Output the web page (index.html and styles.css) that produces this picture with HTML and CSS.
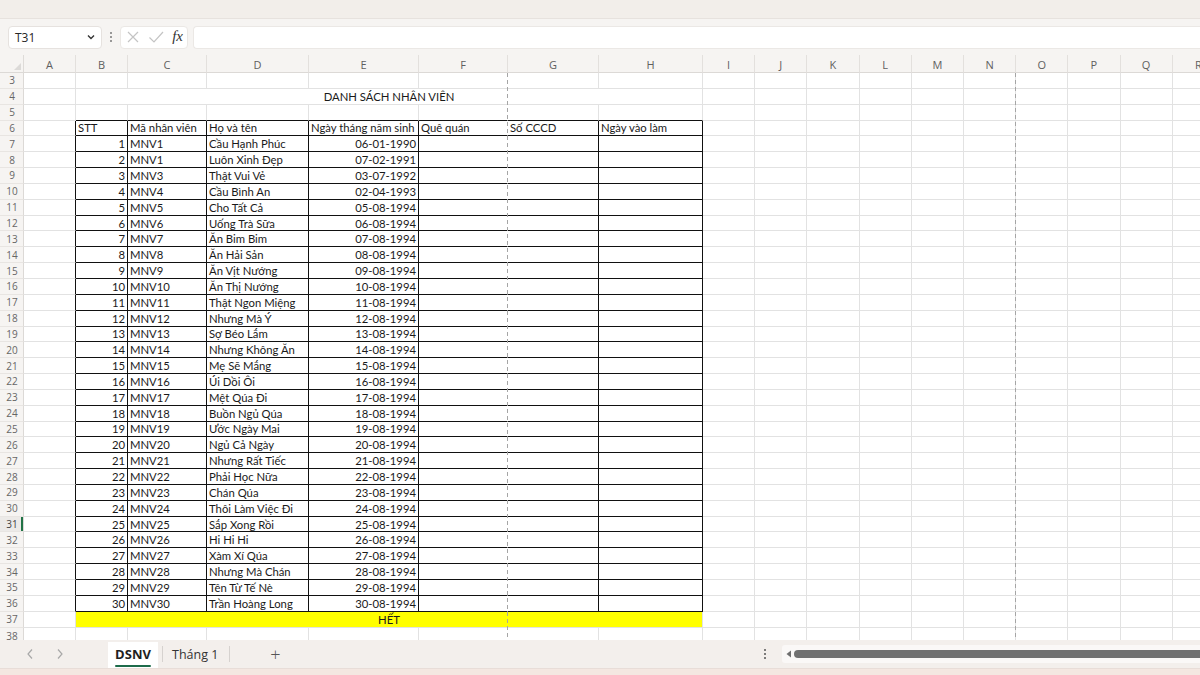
FILE: index.html
```html
<!DOCTYPE html>
<html lang="vi">
<head>
<meta charset="utf-8">
<title>DSNV</title>
<link rel="stylesheet" href="styles.css">
</head>
<body>
<div class="app">
  <div class="topband"></div>
  <div class="fbar">
    <div class="namebox"><span>T31</span>
      <svg class="chev" width="10" height="8" viewBox="0 0 10 8"><path d="M2 2.5 L5 5.5 L8 2.5" fill="none" stroke="#333" stroke-width="1.4"/></svg>
    </div>
    <div class="kebab"><i></i><i></i><i></i></div>
    <div class="fxbox">
      <svg width="14" height="14" viewBox="0 0 14 14"><path d="M2 2 L12 12 M12 2 L2 12" stroke="#c4c4c4" stroke-width="1.2"/></svg>
      <svg width="16" height="14" viewBox="0 0 16 14"><path d="M1.5 7.5 L6 12 L15 2" fill="none" stroke="#c4c4c4" stroke-width="1.2"/></svg>
      <span class="fx">fx</span>
    </div>
    <div class="finput"></div>
  </div>

  <div class="sheet">
    <div class="grid">
      <div class="corner"><span class="tri"></span></div>
      <div class="ch">A</div><div class="ch">B</div><div class="ch">C</div><div class="ch">D</div><div class="ch">E</div><div class="ch">F</div><div class="ch">G</div><div class="ch">H</div><div class="ch">I</div><div class="ch">J</div><div class="ch">K</div><div class="ch">L</div><div class="ch">M</div><div class="ch">N</div><div class="ch">O</div><div class="ch">P</div><div class="ch">Q</div><div class="ch">R</div>

      <div class="rh">3</div><div class="c"></div><div class="c"></div><div class="c"></div><div class="c"></div><div class="c"></div><div class="c f"></div><div class="c"></div><div class="c"></div><div class="rest"></div>
      <div class="rh">4</div><div class="c"></div><div class="c merged title">DANH SÁCH NHÂN VIÊN</div><div class="rest"></div>
      <div class="rh">5</div><div class="c"></div><div class="c tt"></div><div class="c tt"></div><div class="c tt"></div><div class="c tt"></div><div class="c tt f"></div><div class="c tt"></div><div class="c tt"></div><div class="rest"></div>
      <div class="rh">6</div><div class="c al"></div><div class="c t">STT</div><div class="c t">Mã nhân viên</div><div class="c t">Họ và tên</div><div class="c t">Ngày tháng năm sinh</div><div class="c t f">Quê quán</div><div class="c t">Số CCCD</div><div class="c t">Ngày vào làm</div><div class="rest"></div>
      <div class="rh">7</div><div class="c al"></div><div class="c t r">1</div><div class="c t">MNV1</div><div class="c t">Cầu Hạnh Phúc</div><div class="c t r">06-01-1990</div><div class="c t f"></div><div class="c t"></div><div class="c t"></div><div class="rest"></div>
      <div class="rh">8</div><div class="c al"></div><div class="c t r">2</div><div class="c t">MNV1</div><div class="c t">Luôn Xinh Đẹp</div><div class="c t r">07-02-1991</div><div class="c t f"></div><div class="c t"></div><div class="c t"></div><div class="rest"></div>
      <div class="rh">9</div><div class="c al"></div><div class="c t r">3</div><div class="c t">MNV3</div><div class="c t">Thật Vui Vẻ</div><div class="c t r">03-07-1992</div><div class="c t f"></div><div class="c t"></div><div class="c t"></div><div class="rest"></div>
      <div class="rh">10</div><div class="c al"></div><div class="c t r">4</div><div class="c t">MNV4</div><div class="c t">Cầu Bình An</div><div class="c t r">02-04-1993</div><div class="c t f"></div><div class="c t"></div><div class="c t"></div><div class="rest"></div>
      <div class="rh">11</div><div class="c al"></div><div class="c t r">5</div><div class="c t">MNV5</div><div class="c t">Cho Tất Cả</div><div class="c t r">05-08-1994</div><div class="c t f"></div><div class="c t"></div><div class="c t"></div><div class="rest"></div>
      <div class="rh">12</div><div class="c al"></div><div class="c t r">6</div><div class="c t">MNV6</div><div class="c t">Uống Trà Sữa</div><div class="c t r">06-08-1994</div><div class="c t f"></div><div class="c t"></div><div class="c t"></div><div class="rest"></div>
      <div class="rh">13</div><div class="c al"></div><div class="c t r">7</div><div class="c t">MNV7</div><div class="c t">Ăn Bim Bim</div><div class="c t r">07-08-1994</div><div class="c t f"></div><div class="c t"></div><div class="c t"></div><div class="rest"></div>
      <div class="rh">14</div><div class="c al"></div><div class="c t r">8</div><div class="c t">MNV8</div><div class="c t">Ăn Hải Sản</div><div class="c t r">08-08-1994</div><div class="c t f"></div><div class="c t"></div><div class="c t"></div><div class="rest"></div>
      <div class="rh">15</div><div class="c al"></div><div class="c t r">9</div><div class="c t">MNV9</div><div class="c t">Ăn Vịt Nướng</div><div class="c t r">09-08-1994</div><div class="c t f"></div><div class="c t"></div><div class="c t"></div><div class="rest"></div>
      <div class="rh">16</div><div class="c al"></div><div class="c t r">10</div><div class="c t">MNV10</div><div class="c t">Ăn Thị Nướng</div><div class="c t r">10-08-1994</div><div class="c t f"></div><div class="c t"></div><div class="c t"></div><div class="rest"></div>
      <div class="rh">17</div><div class="c al"></div><div class="c t r">11</div><div class="c t">MNV11</div><div class="c t">Thật Ngon Miệng</div><div class="c t r">11-08-1994</div><div class="c t f"></div><div class="c t"></div><div class="c t"></div><div class="rest"></div>
      <div class="rh">18</div><div class="c al"></div><div class="c t r">12</div><div class="c t">MNV12</div><div class="c t">Nhưng Mà Ý</div><div class="c t r">12-08-1994</div><div class="c t f"></div><div class="c t"></div><div class="c t"></div><div class="rest"></div>
      <div class="rh">19</div><div class="c al"></div><div class="c t r">13</div><div class="c t">MNV13</div><div class="c t">Sợ Béo Lắm</div><div class="c t r">13-08-1994</div><div class="c t f"></div><div class="c t"></div><div class="c t"></div><div class="rest"></div>
      <div class="rh">20</div><div class="c al"></div><div class="c t r">14</div><div class="c t">MNV14</div><div class="c t">Nhưng Không Ăn</div><div class="c t r">14-08-1994</div><div class="c t f"></div><div class="c t"></div><div class="c t"></div><div class="rest"></div>
      <div class="rh">21</div><div class="c al"></div><div class="c t r">15</div><div class="c t">MNV15</div><div class="c t">Mẹ Sẽ Mắng</div><div class="c t r">15-08-1994</div><div class="c t f"></div><div class="c t"></div><div class="c t"></div><div class="rest"></div>
      <div class="rh">22</div><div class="c al"></div><div class="c t r">16</div><div class="c t">MNV16</div><div class="c t">Úi Dồi Ôi</div><div class="c t r">16-08-1994</div><div class="c t f"></div><div class="c t"></div><div class="c t"></div><div class="rest"></div>
      <div class="rh">23</div><div class="c al"></div><div class="c t r">17</div><div class="c t">MNV17</div><div class="c t">Mệt Qúa Đi</div><div class="c t r">17-08-1994</div><div class="c t f"></div><div class="c t"></div><div class="c t"></div><div class="rest"></div>
      <div class="rh">24</div><div class="c al"></div><div class="c t r">18</div><div class="c t">MNV18</div><div class="c t">Buồn Ngủ Qúa</div><div class="c t r">18-08-1994</div><div class="c t f"></div><div class="c t"></div><div class="c t"></div><div class="rest"></div>
      <div class="rh">25</div><div class="c al"></div><div class="c t r">19</div><div class="c t">MNV19</div><div class="c t">Ước Ngày Mai</div><div class="c t r">19-08-1994</div><div class="c t f"></div><div class="c t"></div><div class="c t"></div><div class="rest"></div>
      <div class="rh">26</div><div class="c al"></div><div class="c t r">20</div><div class="c t">MNV20</div><div class="c t">Ngủ Cả Ngày</div><div class="c t r">20-08-1994</div><div class="c t f"></div><div class="c t"></div><div class="c t"></div><div class="rest"></div>
      <div class="rh">27</div><div class="c al"></div><div class="c t r">21</div><div class="c t">MNV21</div><div class="c t">Nhưng Rất Tiếc</div><div class="c t r">21-08-1994</div><div class="c t f"></div><div class="c t"></div><div class="c t"></div><div class="rest"></div>
      <div class="rh">28</div><div class="c al"></div><div class="c t r">22</div><div class="c t">MNV22</div><div class="c t">Phải Học Nữa</div><div class="c t r">22-08-1994</div><div class="c t f"></div><div class="c t"></div><div class="c t"></div><div class="rest"></div>
      <div class="rh">29</div><div class="c al"></div><div class="c t r">23</div><div class="c t">MNV23</div><div class="c t">Chán Qúa</div><div class="c t r">23-08-1994</div><div class="c t f"></div><div class="c t"></div><div class="c t"></div><div class="rest"></div>
      <div class="rh">30</div><div class="c al"></div><div class="c t r">24</div><div class="c t">MNV24</div><div class="c t">Thôi Làm Việc Đi</div><div class="c t r">24-08-1994</div><div class="c t f"></div><div class="c t"></div><div class="c t"></div><div class="rest"></div>
      <div class="rh sel">31</div><div class="c al"></div><div class="c t r">25</div><div class="c t">MNV25</div><div class="c t">Sắp Xong Rồi</div><div class="c t r">25-08-1994</div><div class="c t f"></div><div class="c t"></div><div class="c t"></div><div class="rest"></div>
      <div class="rh">32</div><div class="c al"></div><div class="c t r">26</div><div class="c t">MNV26</div><div class="c t">Hi Hi Hi</div><div class="c t r">26-08-1994</div><div class="c t f"></div><div class="c t"></div><div class="c t"></div><div class="rest"></div>
      <div class="rh">33</div><div class="c al"></div><div class="c t r">27</div><div class="c t">MNV27</div><div class="c t">Xàm Xí Qúa</div><div class="c t r">27-08-1994</div><div class="c t f"></div><div class="c t"></div><div class="c t"></div><div class="rest"></div>
      <div class="rh">34</div><div class="c al"></div><div class="c t r">28</div><div class="c t">MNV28</div><div class="c t">Nhưng Mà Chán</div><div class="c t r">28-08-1994</div><div class="c t f"></div><div class="c t"></div><div class="c t"></div><div class="rest"></div>
      <div class="rh">35</div><div class="c al"></div><div class="c t r">29</div><div class="c t">MNV29</div><div class="c t">Tên Từ Tế Nè</div><div class="c t r">29-08-1994</div><div class="c t f"></div><div class="c t"></div><div class="c t"></div><div class="rest"></div>
      <div class="rh">36</div><div class="c al"></div><div class="c t r">30</div><div class="c t">MNV30</div><div class="c t">Trần Hoàng Long</div><div class="c t r">30-08-1994</div><div class="c t f"></div><div class="c t"></div><div class="c t"></div><div class="rest"></div>
      <div class="rh">37</div><div class="c"></div><div class="c merged yellow">HẾT</div><div class="rest"></div>
      <div class="rh last">38</div><div class="c"></div><div class="c"></div><div class="c"></div><div class="c"></div><div class="c"></div><div class="c f"></div><div class="c"></div><div class="c"></div><div class="rest"></div>
    </div>
    <div class="pb pb1"></div>
    <div class="pb pb2"></div>
  </div>

  <div class="tabbar">
    <div class="nav">
      <svg width="8" height="12" viewBox="0 0 8 12"><path d="M6 1.5 L2 6 L6 10.5" fill="none" stroke="#a8a8a8" stroke-width="1.2"/></svg>
      <svg width="8" height="12" viewBox="0 0 8 12"><path d="M2 1.5 L6 6 L2 10.5" fill="none" stroke="#a8a8a8" stroke-width="1.2"/></svg>
    </div>
    <div class="tab active"><span>DSNV</span></div>
    <div class="sep"></div>
    <div class="tab plain">Tháng 1</div>
    <div class="sep"></div>
    <div class="plus">+</div>
    <div class="spacer"></div>
    <div class="kebab small"><i></i><i></i><i></i></div>
    <div class="hscroll">
      <svg width="6" height="8" viewBox="0 0 6 8"><path d="M5 0.5 L0.5 4 L5 7.5 Z" fill="#6e6e6e"/></svg>
      <div class="thumb"></div>
    </div>
  </div>
  <div class="bottomstrip"></div>
</div>
</body>
</html>
```

FILE: styles.css
```css
* { box-sizing: border-box; }
html, body { margin: 0; padding: 0; }
body {
  width: 1200px;
  height: 675px;
  overflow: hidden;
  background: #f5f2ef;
  font-family: "Lato", "Liberation Sans", sans-serif;
}
.app { width: 1200px; height: 675px; display: flex; flex-direction: column; }

.topband { height: 19px; background: #f2eeea; border-bottom: 1px solid #e7e2de; flex: none; }

.fbar {
  height: 36px;
  flex: none;
  display: flex;
  align-items: center;
  padding-left: 8px;
  background: #f6f4f2;
}
.namebox {
  width: 94px; height: 23px;
  background: #fff;
  border: 1px solid #e6e2df;
  border-radius: 4px;
  display: flex; align-items: center; justify-content: space-between;
  padding: 0 5px 0 6px;
  font-family: "Open Sans", sans-serif;
  font-size: 12px;
  color: #262626;
}
.kebab { display: flex; flex-direction: column; gap: 2px; margin: 0 8px 0 8px; }
.kebab i { display: block; width: 2px; height: 2px; background: #7a7a7a; border-radius: 1px; }
.fxbox {
  width: 68px; height: 23px;
  background: #fff;
  border: 1px solid #ebe8e5;
  border-radius: 4px;
  display: flex; align-items: center; justify-content: space-between;
  padding: 0 4px 0 5px;
}
.fx {
  font-family: "Liberation Serif", serif;
  font-style: italic;
  font-size: 15px;
  color: #333;
  line-height: 1;
  margin-top: -2px;
}
.finput {
  flex: 1;
  height: 23px;
  margin-left: 5px;
  background: #fff;
  border: 1px solid #ebe8e5;
  border-right: none;
  border-radius: 4px 0 0 4px;
}

.sheet {
  height: 585px;
  flex: none;
  overflow: hidden;
  background: #fff;
  position: relative;
}
.grid {
  display: grid;
  grid-template-columns: 24px 52px 52px 79px 102px 110px 89px 91px 104px repeat(10, 52.2px);
  grid-template-rows: 18px repeat(36, 15.85px);
  font-size: 11.3px;
  color: #1a1a1a;
}
.corner {
  background: #f6f4f2;
  border-right: 1px solid #dedbd8;
  border-bottom: 1px solid #dcd9d6;
  position: relative;
}
.tri {
  position: absolute; right: 2px; bottom: 2px;
  width: 0; height: 0;
  border-left: 7px solid transparent;
  border-bottom: 7px solid #dcdad8;
}
.ch {
  background: #f6f4f2;
  border-right: 1px solid #e3e0dd;
  border-bottom: 1px solid #dcd9d6;
  color: #5f5f5f;
  font-family: "Open Sans", sans-serif;
  font-size: 11px;
  display: flex; align-items: center; justify-content: center;
  padding-top: 1px;
}
.rh {
  background: #f6f4f2;
  border-right: 1px solid #dcd9d6;
  border-bottom: 1px solid #e8e5e2;
  color: #666;
  font-family: "Open Sans", sans-serif;
  font-size: 10px;
  display: flex; align-items: center; justify-content: center;
  padding-left: 1px;
}
.rh.last { align-items: flex-start; padding-top: 1px; }
.rh.sel { box-shadow: inset -2px 0 0 #217346; background: #eceae8; color: #444; }

.c {
  border-right: 1px solid #e2e2e2;
  border-bottom: 1px solid #e2e2e2;
  padding: 0 2px;
  line-height: 15px;
  white-space: nowrap;
  overflow: hidden;
  display: flex; align-items: center;
}
.c.tt { border-bottom-color: #111; }
.c.al { border-right-color: #111; }
.c.t { border-right-color: #111; border-bottom-color: #111; }
.c.f { border-right-color: transparent; }
.c.r { justify-content: flex-end; }
.c.merged { grid-column: span 7; justify-content: center; }
.c.yellow { background: #ffff00; border-bottom-color: #e2e2e2; border-right-color: #e2e2e2; }

.rest {
  grid-column: span 10;
  border-bottom: 1px solid #e2e2e2;
  background-image: repeating-linear-gradient(to right, transparent 0, transparent 51.2px, #e2e2e2 51.2px, #e2e2e2 52.2px);
}

.pb {
  position: absolute;
  top: 18px;
  bottom: 0;
  width: 1px;
  background-image: repeating-linear-gradient(to bottom, #a5a5a5 0, #a5a5a5 4px, transparent 4px, transparent 7px);
}
.pb1 { left: 507px; }
.pb2 { left: 1015px; }

.tabbar {
  height: 28px;
  flex: none;
  display: flex;
  align-items: center;
  background: #f3efec;
  font-family: "Open Sans", sans-serif;
}
.nav { display: flex; gap: 22px; padding-left: 26px; width: 108px; }
.tab {
  height: 26px;
  display: flex; align-items: center;
  font-size: 12.5px;
  color: #333;
}
.tab.plain { padding: 0 11px 0 9px; }
.tab.active {
  background: #fff;
  width: 50px;
  padding: 0;
  justify-content: center;
  font-weight: 700;
  font-size: 13px;
  color: #1f1f1f;
  margin-top: 1px;
}
.tab.active span { position: relative; padding-bottom: 2px; }
.tab.active span::after {
  content: ""; position: absolute; left: 0; right: 0; bottom: -2px;
  height: 2px; background: #1d6b4a; border-radius: 1px;
}
.sep { width: 1px; height: 16px; background: #d6d2cf; margin-left: 4px; }
.tab.plain + .sep { margin-left: 0; }
.plus { font-size: 18px; color: #555; margin-left: 40px; font-weight: 300; }
.spacer { flex: 1; }
.kebab.small { margin: 0 16px 0 0; gap: 2px; }
.kebab.small i { background: #555; }
.hscroll {
  width: 418px;
  height: 18px;
  display: flex; align-items: center; gap: 2px;
  padding-left: 4px;
  background: #faf8f7;
  border-radius: 3px 0 0 3px;
}
.thumb { flex: 1; height: 8px; background: #707070; border-radius: 4px 0 0 4px; }
.bottomstrip { flex: 1; background: #f4e7e1; border-top: 1px solid #e8ddd8; }
```
